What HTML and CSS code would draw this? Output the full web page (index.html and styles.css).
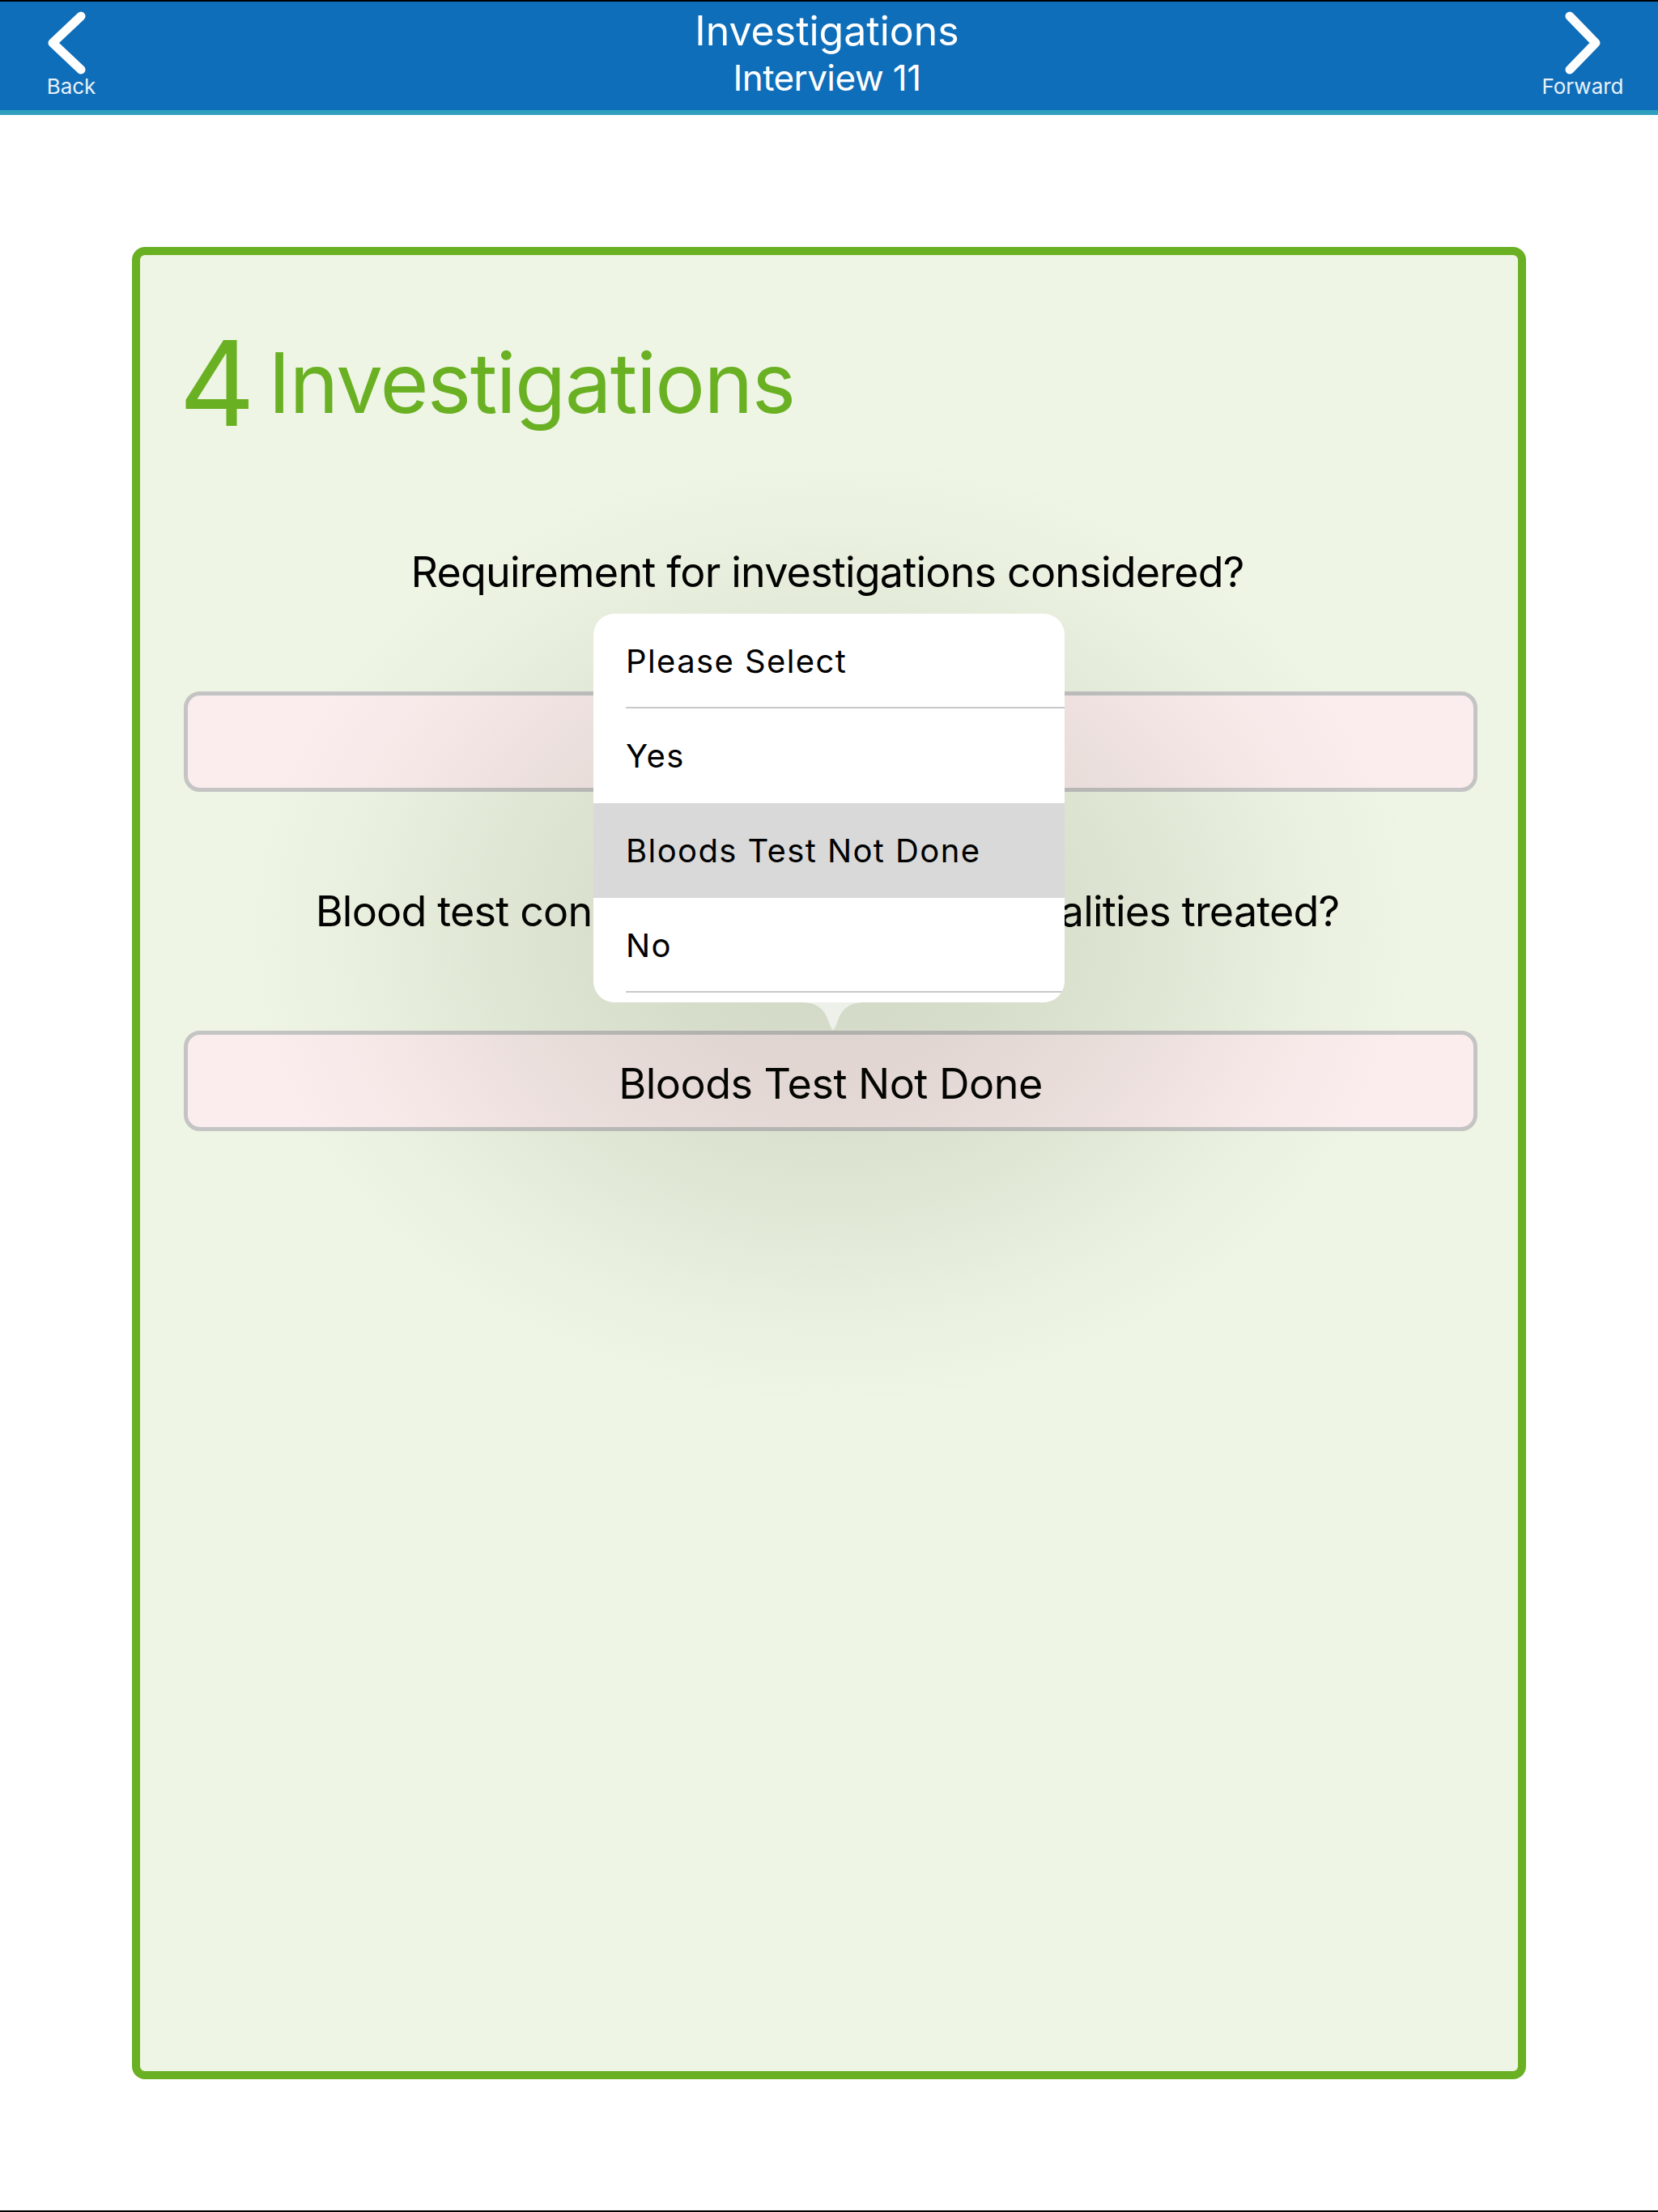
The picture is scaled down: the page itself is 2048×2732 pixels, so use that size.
FILE: index.html
```html
<!DOCTYPE html>
<html lang="en">
<head>
<meta charset="utf-8">
<title>Investigations – Interview 11</title>
<link rel="stylesheet" href="styles.css">
</head>
<body>
<div class="screen">
  <header class="nav">
    <a class="nav-btn">
      <svg class="chev" viewBox="0 0 60 80" width="60" height="80"><polyline points="42,7 7,40 42,73"/></svg>
      <span class="nav-label">Back</span>
    </a>
    <div class="nav-title">
      <div class="title">Investigations</div>
      <div class="subtitle">Interview 11</div>
    </div>
    <a class="nav-btn">
      <svg class="chev" viewBox="0 0 60 80" width="60" height="80"><polyline points="14,7 46,40 14,73"/></svg>
      <span class="nav-label">Forward</span>
    </a>
  </header>
  <main class="content">
    <section class="card">
      <h1 class="section-heading"><span class="num">4</span><span class="name">Investigations</span></h1>
      <div class="questions">
        <div class="question">
          <p class="q-text">Requirement for investigations considered?</p>
          <div class="field"></div>
        </div>
        <div class="question">
          <p class="q-text">Blood test considered and any abnormalities treated?</p>
          <div class="field"><span class="field-value">Bloods Test Not Done</span></div>
        </div>
      </div>
      <div class="popover">
        <ul class="popover-body">
          <li class="option sep">Please Select</li>
          <li class="option">Yes</li>
          <li class="option selected">Bloods Test Not Done</li>
          <li class="option sep">No</li>
          <li class="option"></li>
        </ul>
        <svg class="popover-arrow" viewBox="0 0 80 34" width="80" height="34"><path d="M0,0 C18,0 28,6 34,22 C37,31 39,34 40,34 C41,34 43,31 46,22 C52,6 62,0 80,0 Z"/></svg>
      </div>
    </section>
  </main>
</div>
</body>
</html>
```
FILE: styles.css
```css
html, body {
  margin: 0;
  padding: 0;
  background: #fff;
}

.screen {
  width: 2048px;
  height: 2732px;
  box-sizing: border-box;
  border-top: 2px solid #000;
  border-bottom: 2px solid #000;
  background: #fff;
  font-family: Inter, "Liberation Sans", sans-serif;
  overflow: hidden;
}

/* ---------- navigation bar ---------- */
.nav {
  height: 140px;
  box-sizing: border-box;
  background: #0f6eb9;
  border-bottom: 6px solid #2e9fbf;
  display: flex;
  justify-content: space-between;
  align-items: flex-start;
  padding: 0 33px 0 28px;
  color: #fff;
}

.nav-btn {
  width: 120px;
  display: flex;
  flex-direction: column;
  align-items: center;
  padding-top: 11px;
  color: #fff;
}

.chev {
  display: block;
  width: 60px;
  height: 80px;
  fill: none;
  stroke: #fff;
  stroke-width: 11;
  stroke-linecap: round;
  stroke-linejoin: round;
}

.nav-label {
  font-size: 26px;
  line-height: 26px;
  margin-top: 1px;
  color: #e8f1f9;
}

.nav-title {
  display: flex;
  flex-direction: column;
  align-items: center;
  padding-top: 6px;
}

.title {
  font-size: 50px;
  line-height: 60px;
}

.subtitle {
  font-size: 44px;
  line-height: 50px;
  margin-top: 3px;
  letter-spacing: -0.6px;
}

/* ---------- content card ---------- */
.content {
  padding-top: 163px;
}

.card {
  position: relative;
  width: 1722px;
  height: 2263px;
  margin: 0 auto;
  box-sizing: border-box;
  border: 10px solid #6ab023;
  border-radius: 16px;
  background: #eef5e4;
  padding: 85px 50px 0 54px;
}

.section-heading {
  margin: 0 0 0 -6px;
  display: flex;
  align-items: center;
  height: 146px;
  line-height: 146px;
  color: #6ab023;
  font-weight: 400;
}

.num {
  font-size: 146px;
}

.name {
  font-size: 103px;
  margin-left: 16px;
  letter-spacing: -1.6px;
}

.questions {
  display: flex;
  flex-direction: column;
  gap: 116px;
  margin-top: 129px;
}

.question {
  display: flex;
  flex-direction: column;
}

.q-text {
  margin: 0 0 115px;
  padding-right: 8px;
  font-size: 52px;
  line-height: 64px;
  letter-spacing: -0.8px;
  text-align: center;
  color: #000;
}

.field {
  height: 124px;
  box-sizing: border-box;
  border: 5px solid #c4c4c4;
  border-radius: 20px;
  background: #fbeded;
  display: flex;
  align-items: center;
  justify-content: center;
  padding-top: 7px;
}

.field-value {
  font-size: 52px;
  line-height: 64px;
  letter-spacing: -0.5px;
  color: #000;
}

/* ---------- popover ---------- */
.popover {
  position: absolute;
  z-index: 1;
  left: 560px;
  top: 443px;
  width: 582px;
  height: 480px;
}

/* soft dimming halo cast by the popover */
.popover::before {
  content: "";
  position: absolute;
  z-index: -1;
  left: -440px;
  right: -440px;
  top: -200px;
  bottom: -500px;
  background: radial-gradient(ellipse closest-side at 50% 50%,
    rgba(40, 50, 20, 0.15) 0%,
    rgba(40, 50, 20, 0.12) 30%,
    rgba(40, 50, 20, 0.07) 60%,
    rgba(40, 50, 20, 0.025) 82%,
    rgba(40, 50, 20, 0) 100%);
}

.popover-body {
  list-style: none;
  margin: 0;
  padding: 0;
  height: 100%;
  border-radius: 26px;
  overflow: hidden;
  background: #fff;
}

.option {
  position: relative;
  height: 117px;
  box-sizing: border-box;
  padding-left: 40px;
  font-size: 40px;
  line-height: 117px;
  letter-spacing: 1.4px;
  color: #000;
  white-space: nowrap;
}

.option.sep::after {
  content: "";
  position: absolute;
  left: 40px;
  right: 0;
  bottom: 0;
  height: 2px;
  background: #c8c8cc;
}

.option.selected {
  background: #d9d9d9;
}

.popover-arrow {
  position: absolute;
  left: 256px;
  top: 100%;
  display: block;
  fill: rgba(255, 255, 255, 0.6);
}
```
